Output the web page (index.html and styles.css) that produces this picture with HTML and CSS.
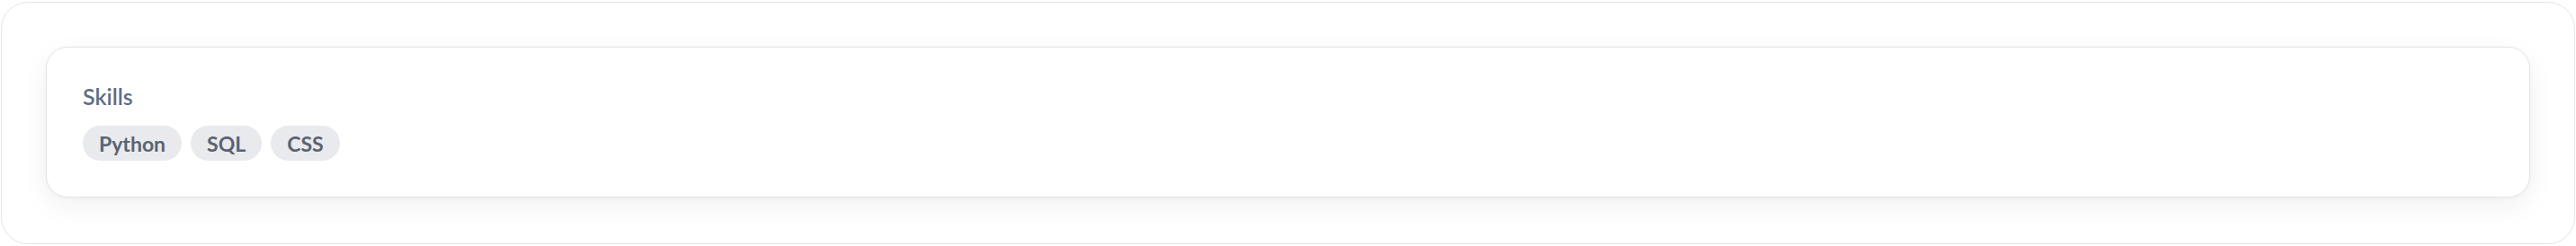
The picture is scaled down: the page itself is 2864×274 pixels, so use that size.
FILE: index.html
```html
<!DOCTYPE html>
<html lang="en">
<head>
<meta charset="utf-8">
<title>Skills</title>
<link rel="stylesheet" href="styles.css">
</head>
<body>
<div class="frame">
  <section class="panel">
    <div class="card">
      <h3 class="card-title">Skills</h3>
      <ul class="chips">
        <li class="chip">Python</li>
        <li class="chip">SQL</li>
        <li class="chip">CSS</li>
      </ul>
    </div>
  </section>
</div>
</body>
</html>
```

FILE: styles.css
```css
html, body {
  margin: 0;
  padding: 0;
  background: #ffffff;
}

body {
  font-family: Lato, "Open Sans", "Liberation Sans", sans-serif;
}

.frame {
  padding: 2px 1px 2px 1px;
}

.panel {
  box-sizing: border-box;
  height: 270px;
  border: 1px solid #e4e5ea;
  border-radius: 30px;
  padding: 49px;
  background: #ffffff;
}

.card {
  box-sizing: border-box;
  height: 168px;
  border: 1px solid #e3e4ea;
  border-radius: 24px;
  padding: 38px 40px 40px 40px;
  background: #ffffff;
  box-shadow: 0 10px 30px rgba(30, 35, 60, 0.06), 0 2px 6px rgba(30, 35, 60, 0.03);
  display: flex;
  flex-direction: column;
  gap: 17px;
}

.card-title {
  margin: 0;
  font-size: 25px;
  line-height: 32px;
  font-weight: 600;
  color: #5d6d85;
}

.chips {
  list-style: none;
  margin: 0;
  padding: 0;
  display: flex;
  gap: 10px;
}

.chip {
  height: 39px;
  box-sizing: border-box;
  display: flex;
  align-items: center;
  padding: 0 18px;
  border-radius: 20px;
  background: #e9eaed;
  color: #5b6372;
  font-size: 23px;
  font-weight: 700;
}
```
